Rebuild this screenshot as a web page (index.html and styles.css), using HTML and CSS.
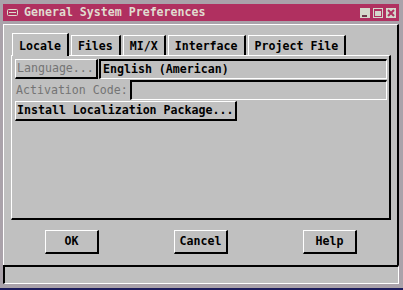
FILE: index.html
```html
<!DOCTYPE html>
<html lang="en">
<head>
  <meta charset="UTF-8" />
  <title>General System Preferences</title>
  <link rel="stylesheet" href="styles.css">
</head>
<body>
  <div class="frame">
    <div class="titlebar">
      <svg class="winicon" width="11" height="7" viewBox="0 0 11 7">
        <rect x="0.5" y="0.5" width="10" height="6" rx="1" fill="none" stroke="#dcdccc"/>
        <rect x="2" y="3" width="7" height="1" fill="#dcdccc"/>
      </svg>
      <span class="title">General System Preferences</span>
      <div class="winbtns">
        <span class="wb"><svg width="10" height="10" viewBox="0 0 10 10"><rect x="2" y="7" width="5" height="2" fill="#6c3a4c"/></svg></span>
        <span class="wb"><svg width="10" height="10" viewBox="0 0 10 10"><rect x="1.5" y="1.5" width="7" height="7" fill="none" stroke="#b03060"/><rect x="2" y="2" width="6" height="1" fill="#b03060"/></svg></span>
        <span class="wb"><svg width="10" height="10" viewBox="0 0 10 10"><path d="M2 2 L8 8 M8 2 L2 8" stroke="#b03060" stroke-width="2"/></svg></span>
      </div>
    </div>

    <div class="client">
      <div class="tabs">
        <div class="tab active">Locale</div>
        <div class="tab">Files</div>
        <div class="tab">MI/X</div>
        <div class="tab">Interface</div>
        <div class="tab">Project File</div>
      </div>

      <div class="tabpanel">
        <div class="row">
          <div class="btn lang disabled">Language...</div>
          <div class="field">English (American)</div>
        </div>
        <div class="row">
          <div class="label disabled">Activation Code:</div>
          <div class="field"></div>
        </div>
        <div class="row">
          <div class="btn">Install Localization Package...</div>
        </div>
      </div>

      <div class="actions">
        <div class="btn action">OK</div>
        <div class="btn action">Cancel</div>
        <div class="btn action">Help</div>
      </div>
    </div>

    <div class="status"></div>
  </div>
</body>
</html>
```

FILE: styles.css
```css
:root {
  --gris: #c0c0c0;
  --marco: #aaa2aa;
  --titulo: #b03060;
}

body {
  margin: 0;
  background: var(--marco);
  font-family: "DejaVu Sans Mono", "Liberation Mono", monospace;
  font-size: 11.6px;
  font-weight: bold;
  color: #000;
}

.frame {
  width: 403px;
  height: 290px;
  box-sizing: border-box;
  padding: 4px 4px 0 3px;
  border-bottom: 2px solid #1c1c5c;
}

.titlebar {
  height: 17px;
  background: var(--titulo);
  display: flex;
  align-items: center;
  margin-bottom: 3px;
}

.winicon {
  margin-left: 4px;
  margin-right: 6px;
}

.title {
  color: #e0dcd0;
  line-height: 17px;
}

.winbtns {
  margin-left: auto;
  display: flex;
  gap: 3px;
  padding-right: 3px;
}

.wb {
  width: 10px;
  height: 10px;
  background: #d4d8cc;
  display: block;
}

.wb svg {
  display: block;
}

.client {
  height: 241px;
  box-sizing: border-box;
  background: var(--gris);
  border-top: 1px solid #fff;
  border-left: 1px solid #fff;
  border-right: 2px solid #000;
  padding: 8px 6px 0 7px;
}

.tabs {
  display: flex;
  align-items: flex-end;
  height: 22px;
  padding-left: 1px;
  position: relative;
  z-index: 1;
}

.tab {
  height: 20px;
  box-sizing: border-box;
  border-top: 1px solid #fff;
  border-left: 1px solid #fff;
  border-right: 2px solid #000;
  padding: 0 6px;
  line-height: 20px;
  margin-right: 2px;
  background: var(--gris);
}

.tab.active {
  height: 23px;
  padding-top: 2px;
  margin-bottom: -1px;
}

.tabpanel {
  height: 165px;
  box-sizing: border-box;
  border-top: 1px solid #fff;
  border-left: 1px solid #fff;
  border-right: 2px solid #000;
  border-bottom: 2px solid #000;
  padding: 3px 2px 0 3px;
}

.row {
  display: flex;
  height: 20px;
  margin-bottom: 1px;
}

.btn {
  box-sizing: border-box;
  border-top: 1px solid #fff;
  border-left: 1px solid #fff;
  border-right: 2px solid #000;
  border-bottom: 2px solid #000;
  padding: 0 2px 0 1px;
  line-height: 17px;
  white-space: nowrap;
}

.lang {
  width: 83px;
  flex: none;
}

.field {
  flex: 1;
  margin-left: 1px;
  box-sizing: border-box;
  border-top: 2px solid #000;
  border-left: 2px solid #000;
  border-bottom: 1px solid #fff;
  border-right: 1px solid #fff;
  padding-left: 2px;
  line-height: 17px;
  white-space: nowrap;
}

.label {
  flex: none;
  width: 113px;
  padding-left: 1px;
  line-height: 20px;
}

.disabled {
  color: #747474;
  font-weight: normal;
}

.actions {
  display: flex;
  gap: 75px;
  margin: 10px 0 0 34px;
}

.action {
  width: 54px;
  height: 24px;
  text-align: center;
  line-height: 21px;
  padding: 0;
}

.status {
  height: 19px;
  box-sizing: border-box;
  background: var(--gris);
  border-top: 2px solid #000;
  border-left: 2px solid #000;
  border-right: 1px solid #fff;
  border-bottom: 1px solid #fff;
}
```
